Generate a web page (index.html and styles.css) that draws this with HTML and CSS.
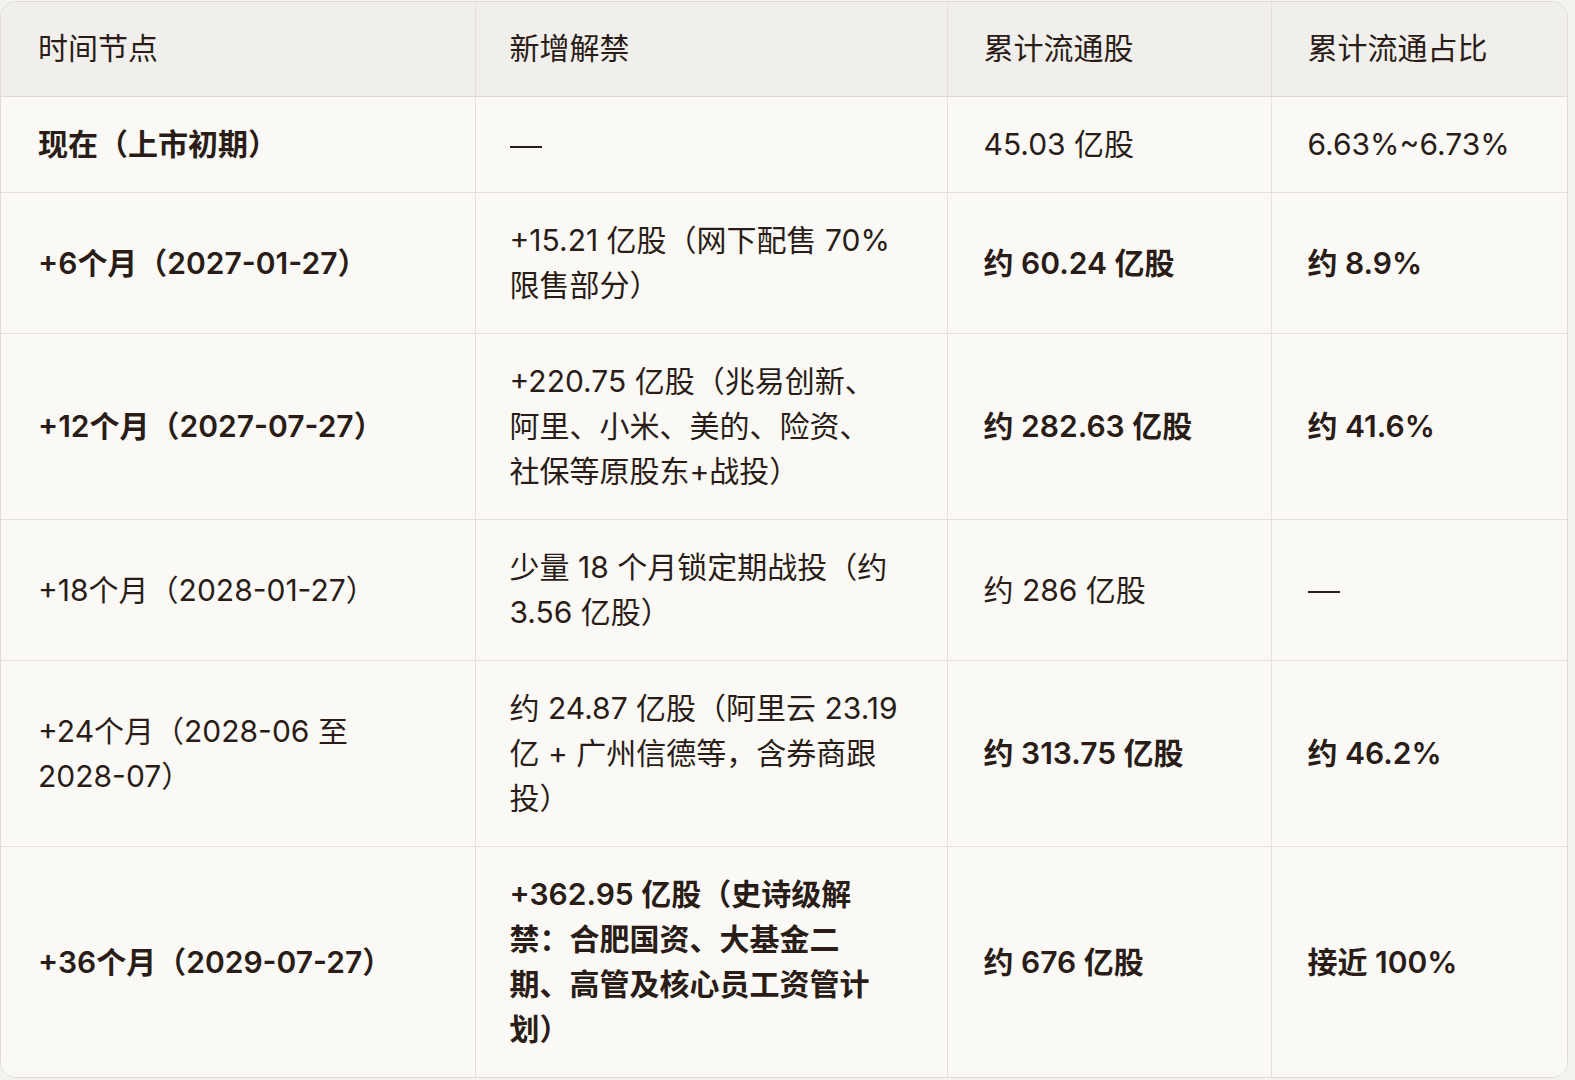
FILE: index.html
```html
<!DOCTYPE html>
<html lang="zh-CN">
<head>
<meta charset="utf-8">
<title>解禁时间表</title>
<link rel="stylesheet" href="styles.css">
</head>
<body>
<div class="frame">
  <table class="grid">
    <colgroup>
      <col class="c1"><col class="c2"><col class="c3"><col class="c4">
    </colgroup>
    <thead>
      <tr>
        <th>时间节点</th>
        <th>新增解禁</th>
        <th>累计流通股</th>
        <th>累计流通占比</th>
      </tr>
    </thead>
    <tbody>
      <tr>
        <td class="b">现在（上市初期）</td>
        <td><span class="dash">—</span></td>
        <td>45.03 亿股</td>
        <td>6.63%~6.73%</td>
      </tr>
      <tr>
        <td class="b">+6个月（2027-01-27）</td>
        <td>+15.21 亿股（网下配售 70%<br>限售部分）</td>
        <td class="b">约 60.24 亿股</td>
        <td class="b">约 8.9%</td>
      </tr>
      <tr>
        <td class="b">+12个月（2027-07-27）</td>
        <td>+220.75 亿股（兆易创新、<br>阿里、小米、美的、险资、<br>社保等原股东+战投）</td>
        <td class="b">约 282.63 亿股</td>
        <td class="b">约 41.6%</td>
      </tr>
      <tr>
        <td>+18个月（2028-01-27）</td>
        <td>少量 18 个月锁定期战投（约<br>3.56 亿股）</td>
        <td>约 286 亿股</td>
        <td><span class="dash">—</span></td>
      </tr>
      <tr>
        <td>+24个月（2028-06 至<br>2028-07）</td>
        <td>约 24.87 亿股（阿里云 23.19<br>亿 + 广州信德等，含券商跟<br>投）</td>
        <td class="b">约 313.75 亿股</td>
        <td class="b">约 46.2%</td>
      </tr>
      <tr>
        <td class="b">+36个月（2029-07-27）</td>
        <td class="b">+362.95 亿股（史诗级解<br>禁：合肥国资、大基金二<br>期、高管及核心员工资管计<br>划）</td>
        <td class="b">约 676 亿股</td>
        <td class="b">接近 100%</td>
      </tr>
    </tbody>
  </table>
</div>
</body>
</html>
```

FILE: styles.css
```css
html, body {
  margin: 0;
  padding: 0;
  background: #f4f3f0;
}
body {
  font-family: Inter, "Noto Sans CJK SC", "Noto Sans", sans-serif;
  color: #2a1d17;
}
.frame {
  width: 1566px;
  margin-top: 1px;
  border: 1px solid #dedbd6;
  border-radius: 16px;
  overflow: hidden;
  background: #faf9f6;
}
.grid {
  width: 100%;
  border-collapse: collapse;
  table-layout: fixed;
}
.c1 { width: 474px; }
.c2 { width: 472px; }
.c3 { width: 324px; }
.c4 { width: auto; }
th, td {
  font-size: 30px;
  line-height: 45px;
  text-align: left;
  vertical-align: middle;
  padding: 25px 30px 25px 36px;
  border-left: 1px solid #e4e1dc;
  border-top: 1px solid #e4e1dc;
  white-space: nowrap;
}
th:first-child, td:first-child { border-left: none; padding-left: 37px; }
th:nth-child(2), td:nth-child(2) { padding-left: 34px; }
thead tr th { border-top: none; }
th {
  font-weight: 400;
  background: #f1efeb;
  padding-top: 24px;
  padding-bottom: 25px;
}
thead th { border-bottom: 1px solid #dcd9d4; }
td { background: #faf9f6; font-weight: 400; }
td.b { font-weight: 600; }
.dash {
  display: inline-block;
  width: 32px;
  height: 2px;
  background: #2a1d17;
  vertical-align: middle;
  color: transparent;
  overflow: hidden;
  font-size: 1px;
  line-height: 2px;
}
```
